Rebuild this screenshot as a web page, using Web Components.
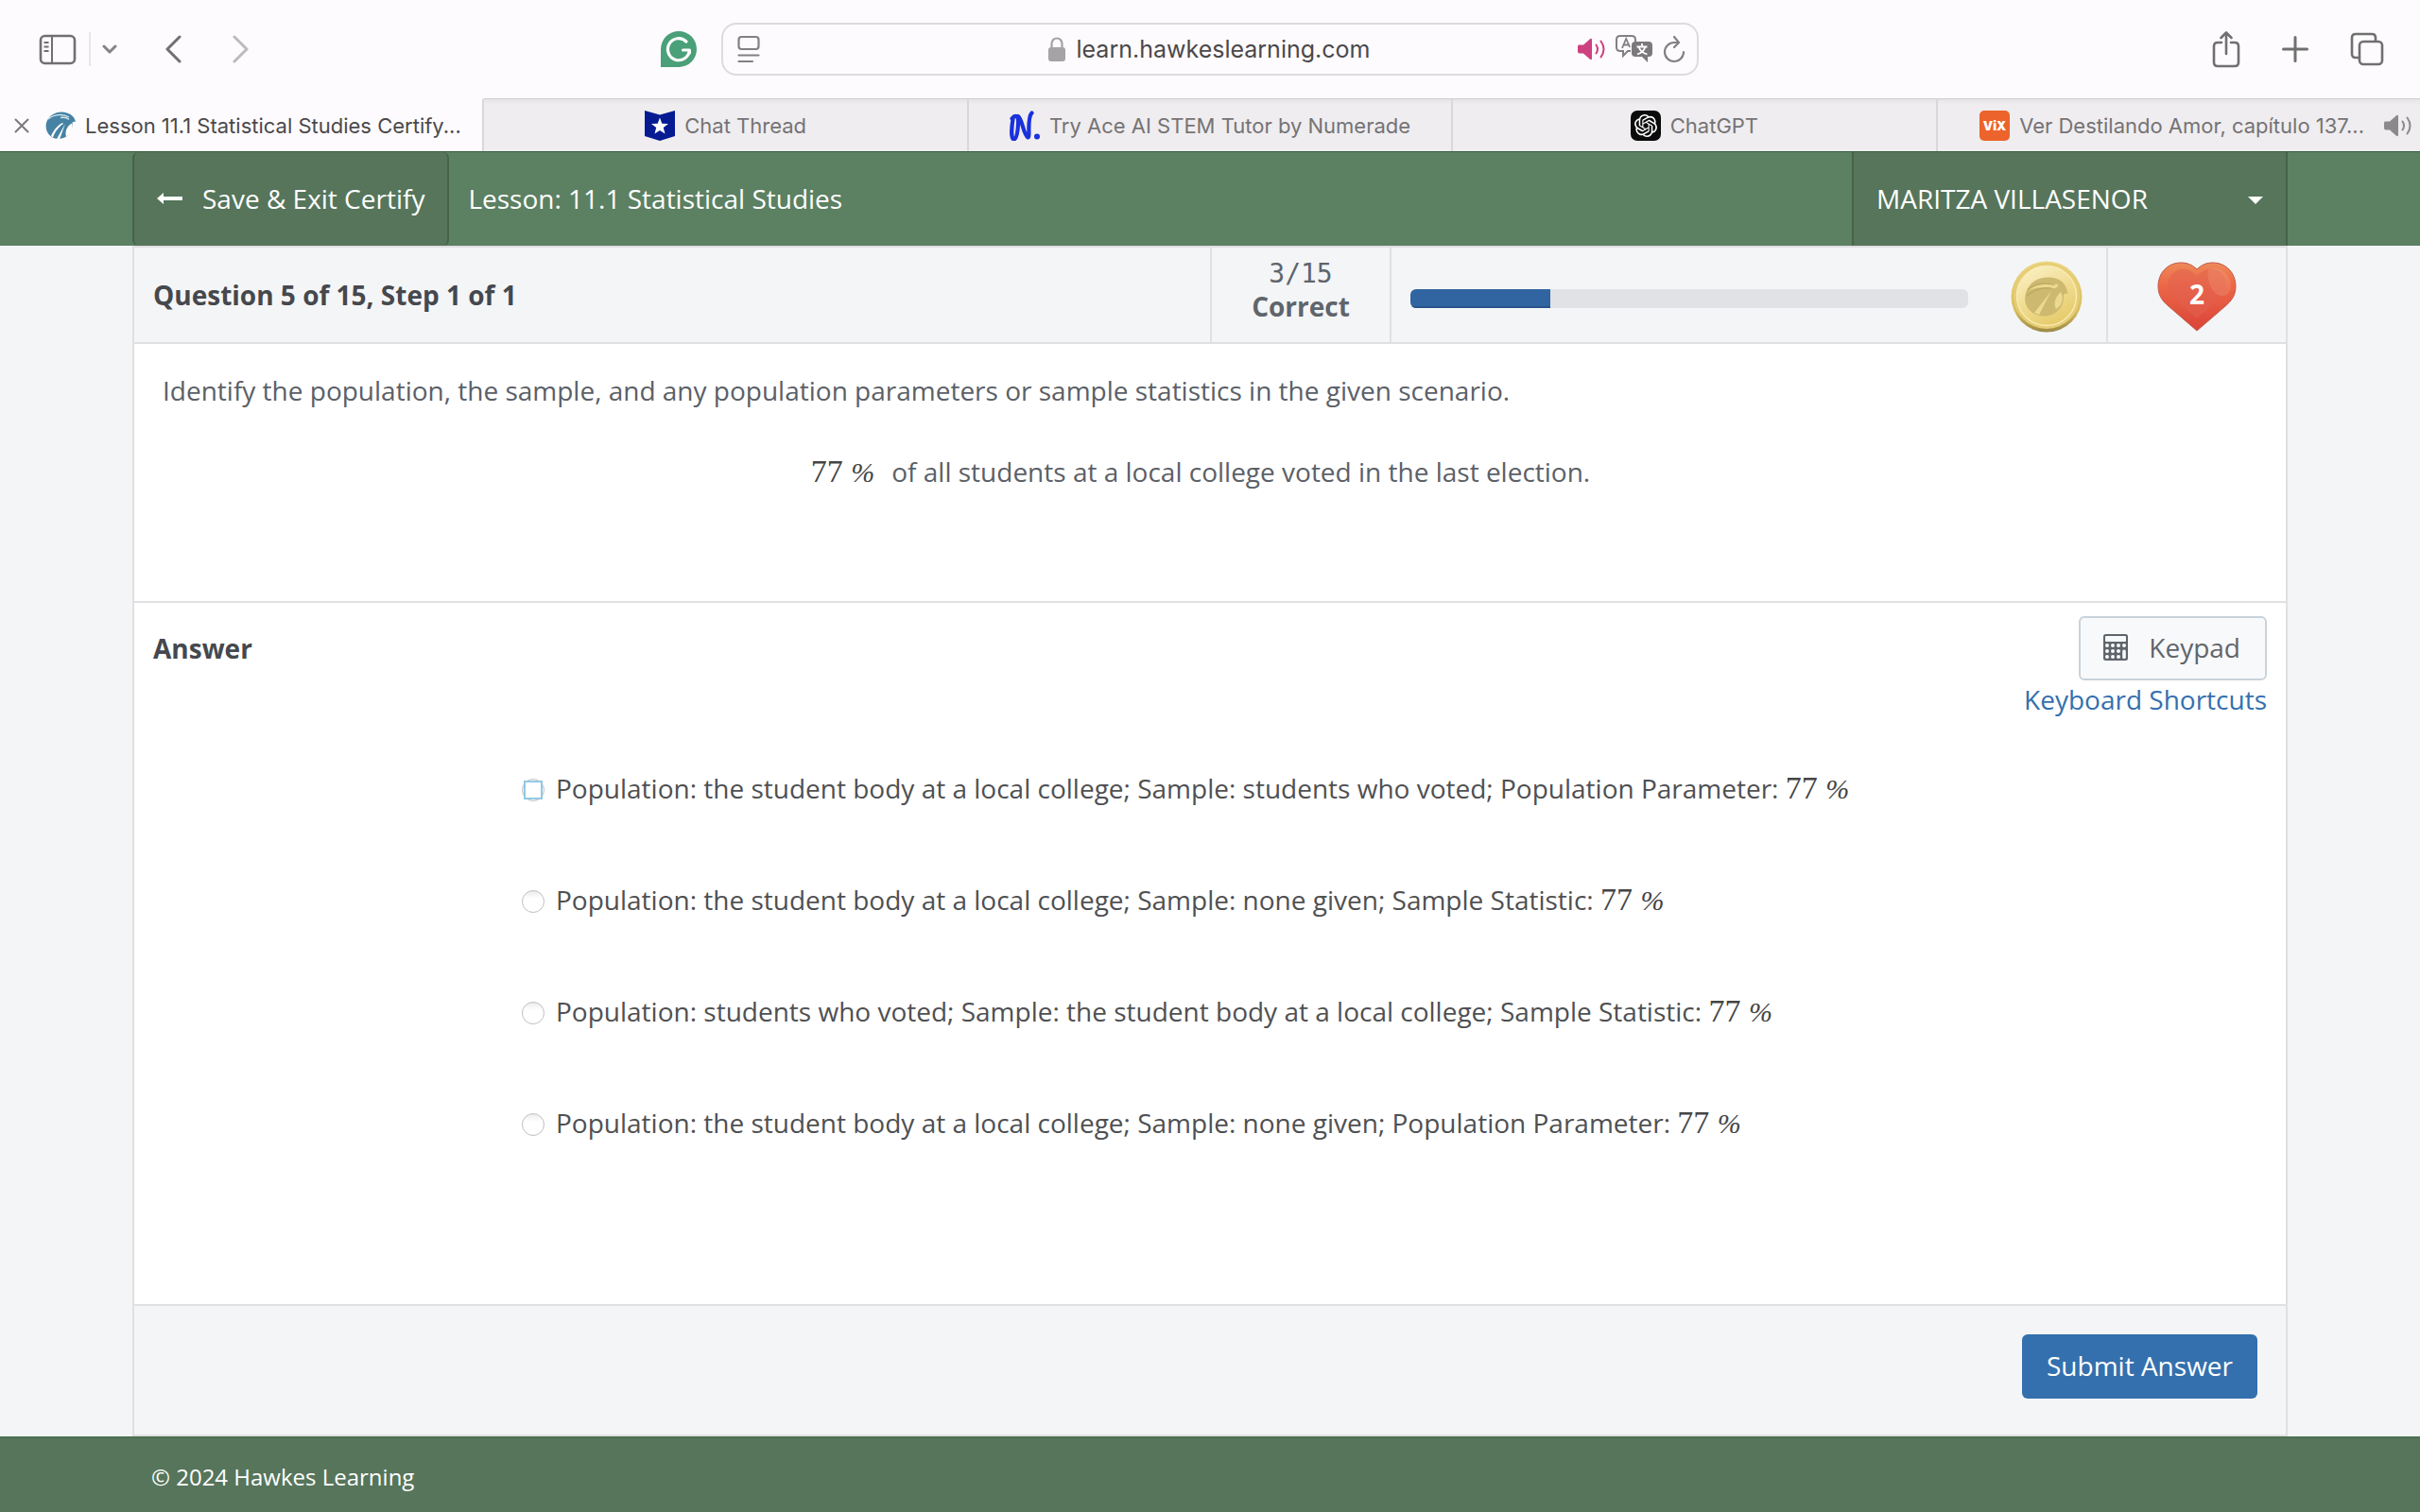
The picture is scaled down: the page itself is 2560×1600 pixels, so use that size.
<!DOCTYPE html>
<html lang="en">
<head>
<meta charset="utf-8">
<title>Lesson 11.1 Statistical Studies Certify</title>
<style>
body { margin: 0; background: #f4f5f7; font-family: "Open Sans", "Noto Sans", sans-serif; font-size: 28px; line-height: 40px; color: #4b4d50; }
</style>
</head>
<body>
<lesson-app></lesson-app>

<script>
const base = `*, *::before, *::after { box-sizing: border-box; }
button, input { font: inherit; color: inherit; margin: 0; padding: 0; border: 0; background: none; }
svg { display: block; flex: none; }`;

function define(name, html) {
  const template = document.createElement('template');
  template.innerHTML = html.replace('<style>', '<style>' + base);
  customElements.define(name, class extends HTMLElement {
    constructor() {
      super();
      this.attachShadow({ mode: 'open' }).append(template.content.cloneNode(true));
    }
  });
}

define('browser-toolbar', `
<style>
:host { display: grid; grid-template-columns: 1fr minmax(0, 1034px) 1fr; align-items: center; height: 104px; background: #fdfbfd; font-family: Inter, sans-serif; color: #707070; }
.side { display: flex; align-items: center; }
.left { padding: 0 26px 0 41px; }
.left .rule { width: 2px; height: 36px; background: #e8e6e8; margin: 0 12px 0 12px; }
.left .back { margin-left: 50px; }
.left .forward { margin-left: 54px; color: #bcbabc; }
.left .assist { margin-left: auto; }
.right { justify-content: flex-end; gap: 44px; padding-right: 38px; }
.address { display: grid; grid-template-columns: 1fr auto 1fr; align-items: center; height: 56px; border: 2px solid #dddbdd; border-radius: 16px; padding: 0 12px 0 15px; }
.site { display: flex; align-items: center; gap: 12px; }
input { width: 316px; height: 40px; font-size: 25px; color: #4b494b; outline: 0; }
.tools { display: flex; align-items: center; justify-content: flex-end; gap: 10px; color: #858385; }
</style>
<div class="side left">
  <button aria-label="Sidebar"><svg width="41" height="34" viewBox="0 0 41 34" fill="none" stroke="currentColor" stroke-width="2.6"><rect x="2" y="3" width="36" height="29" rx="4.500"/><path d="M14 3v29M5.500 10h5M5.500 14.500h5M5.500 19h5" stroke-width="2"/></svg></button>
  <span class="rule"></span>
  <button aria-label="Tab groups"><svg width="16" height="12" viewBox="0 0 16 12" fill="none" stroke="#858385" stroke-width="3" stroke-linecap="round" stroke-linejoin="round"><path d="M2 3l6 6 6-6"/></svg></button>
  <button class="back" aria-label="Back"><svg width="18" height="30" viewBox="0 0 18 30" fill="none" stroke="currentColor" stroke-width="3" stroke-linecap="round" stroke-linejoin="round"><path d="M16 2L3 15l13 13"/></svg></button>
  <button class="forward" aria-label="Forward"><svg width="18" height="30" viewBox="0 0 18 30" fill="none" stroke="currentColor" stroke-width="3" stroke-linecap="round" stroke-linejoin="round"><path d="M2 2l13 13L2 28"/></svg></button>
  <button class="assist" aria-label="Writing assistant"><svg width="38" height="38" viewBox="0 0 38 38"><path d="M0 38V19A19 19 0 1 1 19 38Z" fill="#4aa078"/><path d="M27 11A11.500 11.500 0 1 0 30.400 20H23.500M30.400 20V23" fill="none" stroke="#fff" stroke-width="3.200" stroke-linecap="round" stroke-linejoin="round"/></svg></button>
</div>
<div class="address">
  <svg width="24" height="30" viewBox="0 0 24 30" fill="none" stroke="#828082" stroke-width="2.200" stroke-linecap="round"><rect x="1.500" y="2" width="21" height="13" rx="3"/><path d="M1.500 21.500h21M1.500 28h14.500"/></svg>
  <label class="site">
    <svg width="18" height="26" viewBox="0 0 18 26"><rect y="11" width="18" height="15" rx="3" fill="#a5a3a5"/><path d="M3.500 12V7a5.500 5.500 0 0 1 11 0v5" fill="none" stroke="#a5a3a5" stroke-width="2.200"/></svg>
    <input type="text" aria-label="Address" value="learn.hawkeslearning.com">
  </label>
  <div class="tools">
    <svg width="30" height="24" viewBox="0 0 30 24"><path d="M1 7.500h5L13 1.200q2-1 2 1v19.600q0 2-2 1L6 16.500H2q-2 0-2-2v-5q0-2 1-2z" fill="#ce4080"/><path d="M19.500 7.500q3 4.500 0 9M24.500 3.500q6 8.500 0 17" fill="none" stroke="#ce4080" stroke-width="2" stroke-linecap="round"/></svg>
    <svg width="40" height="30" viewBox="0 0 40 30" fill="none" stroke="#828082" stroke-width="2"><path d="M16 17H13l-5 5v-5H5q-4 0-4-4V5q0-4 4-4h12q4 0 4 4v2"/><path d="M7 14l4.200-10 4 9M8.500 10.500h5" stroke-width="1.800"/><path d="M21 7h14q4 0 4 4v8q0 4-4 4h-1v6l-6-6h-7q-4 0-4-4v-8q0-4 4-4z" fill="#7b797b" stroke="none"/><path d="M28 9v3M22.500 12.500h11M31.500 12.500q-2 6-8.500 8M24.500 12.500q2 6 9 8" stroke="#fff" stroke-width="1.800"/></svg>
    <svg width="24" height="30" viewBox="0 0 24 30" fill="none" stroke="#828082" stroke-width="2.200" stroke-linecap="round" stroke-linejoin="round"><path d="M22 18a10 10 0 1 1-10-10h4.500M12 2l5 6-5 5"/></svg>
  </div>
</div>
<div class="side right">
  <button aria-label="Share"><svg width="30" height="40" viewBox="0 0 30 40" fill="none" stroke="currentColor" stroke-width="2.600" stroke-linecap="round" stroke-linejoin="round"><path d="M10 13H6q-4 0-4 4v17q0 4 4 4h18q4 0 4-4V17q0-4-4-4h-4M15 25V3M9.500 8L15 2.500 20.500 8"/></svg></button>
  <button aria-label="New tab"><svg width="28" height="28" viewBox="0 0 28 28" stroke="currentColor" stroke-width="3" stroke-linecap="round"><path d="M14 1.500v25M1.500 14h25"/></svg></button>
  <button aria-label="Show tabs"><svg width="36" height="36" viewBox="0 0 36 36" fill="none" stroke="currentColor" stroke-width="2.600" stroke-linejoin="round"><rect x="10" y="10" width="24" height="24" rx="4"/><path d="M9 27H6q-4 0-4-4V6q0-4 4-4h17q4 0 4 4v3"/></svg></button>
</div>`);

define('browser-tab', `
<style>
:host { display: flex; min-width: 0; flex: 1 1 0; border-right: 2px solid #d9d7d9; border-top: 1px solid #cfcdcf; background: linear-gradient(#e6e4e6, #efedef 6px); color: #757375; }
:host([active]) { background: #fdfbfd; border-top-color: #fdfbfd; color: #4b494b; }
:host(:last-child) { border-right: 0; }
button { flex: 1; min-width: 0; display: flex; align-items: center; justify-content: center; gap: 10px; font-size: 22px; line-height: 32px; white-space: nowrap; }
:host([active]) button { justify-content: flex-start; padding-left: 15px; }
:host([sound]) button { justify-content: flex-end; padding-right: 8px; }
::slotted(svg) { display: block; flex: none; }
</style>
<button role="tab"><slot name="icon"></slot><span><slot></slot></span><slot name="end"></slot></button>`);

define('tab-strip', `
<style>
:host { display: flex; height: 56px; font-family: Inter, sans-serif; }
.close { margin-right: 7px; }
.speaker { margin-left: 11px; }
</style>
<browser-tab active>
  <svg slot="icon" class="close" width="16" height="16" viewBox="0 0 16 16" stroke="#7b797b" stroke-width="2" stroke-linecap="round"><path d="M1.500 1.500l13 13M14.500 1.500l-13 13"/></svg>
  <svg slot="icon" width="32" height="30" viewBox="0 0 32 30"><path d="M1 12C4 3 13-1 22 1.200c6 1.500 9 5 10 9.800-2-.5-3 0-3.500 1C29 21 23 29 14 29 5 29-1 21 1 12z" fill="#4682a3"/><path d="M3 8C9 3 18 2 25 6M16 6.500q6-1 9 2" fill="none" stroke="#d5e5ed" stroke-width="1.300"/><path d="M18 12C12 15 8 21 6 26l2 1.500C10 22 13 17 19 13zM21 13L12 29l3 .5zM28 12.500c1 6-1 11-6 14-1.500-5 .5-11 6-14z" fill="#fff"/></svg>
  Lesson 11.1 Statistical Studies Certify...
</browser-tab>
<browser-tab>
  <svg slot="icon" width="32" height="32" viewBox="0 0 32 32"><path d="M0 0l16 4.500L32 0v27l-16 5-16-5z" fill="#061a92"/><path d="M16 7.500l2.300 6.200 6.700.3-5.200 4.100 1.700 6.400-5.500-3.600-5.500 3.600 1.700-6.400L7 14l6.700-.3z" fill="#fff"/></svg>
  Chat Thread
</browser-tab>
<browser-tab>
  <svg slot="icon" width="32" height="32" viewBox="0 0 32 32"><path d="M2.500 8.500C6 4 10 5 9 15 8.500 25 7 30.500 4.500 30.500 1.500 30 2 18 3.500 9M9 6c4 1 5.500 20 10.500 22.500C22 28 18 8 23.500 2.500" fill="none" stroke="#1a31dc" stroke-width="4.200" stroke-linecap="round" stroke-linejoin="round"/><circle cx="29" cy="27.500" r="3" fill="#1a31dc"/></svg>
  Try Ace AI STEM Tutor by Numerade
</browser-tab>
<browser-tab>
  <svg slot="icon" width="32" height="32" viewBox="0 0 32 32"><rect width="32" height="32" rx="7" fill="#0b0b0b"/><path transform="translate(4 4)" fill="#fff" d="M22.2819 9.8211a5.9847 5.9847 0 0 0-.5157-4.9108 6.0462 6.0462 0 0 0-6.5098-2.9A6.0651 6.0651 0 0 0 4.9807 4.1818a5.9847 5.9847 0 0 0-3.9977 2.9 6.0462 6.0462 0 0 0 .7427 7.0966 5.98 5.98 0 0 0 .511 4.9107 6.051 6.051 0 0 0 6.5146 2.9001A5.9847 5.9847 0 0 0 13.2599 24a6.0557 6.0557 0 0 0 5.7718-4.2058 5.9894 5.9894 0 0 0 3.9977-2.9001 6.0557 6.0557 0 0 0-.7475-7.0729zm-9.022 12.6081a4.4755 4.4755 0 0 1-2.8764-1.0408l.1419-.0804 4.7783-2.7582a.7948.7948 0 0 0 .3927-.6813v-6.7369l2.02 1.1686a.071.071 0 0 1 .038.052v5.5826a4.504 4.504 0 0 1-4.4945 4.4944zm-9.6607-4.1254a4.4708 4.4708 0 0 1-.5346-3.0137l.142.0852 4.783 2.7582a.7712.7712 0 0 0 .7806 0l5.8428-3.3685v2.3324a.0804.0804 0 0 1-.0332.0615L9.74 19.9502a4.4992 4.4992 0 0 1-6.1408-1.6464zM2.3408 7.8956a4.485 4.485 0 0 1 2.3655-1.9728V11.6a.7664.7664 0 0 0 .3879.6765l5.8144 3.3543-2.0201 1.1685a.0757.0757 0 0 1-.071 0l-4.8303-2.7865A4.504 4.504 0 0 1 2.3408 7.872zm16.5963 3.8558L13.1038 8.364 15.1192 7.2a.0757.0757 0 0 1 .071 0l4.8303 2.7913a4.4944 4.4944 0 0 1-.6765 8.1042v-5.6772a.79.79 0 0 0-.407-.667zm2.0107-3.0231l-.142-.0852-4.7735-2.7818a.7759.7759 0 0 0-.7854 0L9.409 9.2297V6.8974a.0662.0662 0 0 1 .0284-.0615l4.8303-2.7866a4.4992 4.4992 0 0 1 6.6802 4.66zM8.3065 12.863l-2.02-1.1638a.0804.0804 0 0 1-.038-.0567V6.0742a4.4992 4.4992 0 0 1 7.3757-3.4537l-.142.0805L8.704 5.459a.7948.7948 0 0 0-.3927.6813zm1.0976-2.3654l2.602-1.4998 2.6069 1.4998v2.9994l-2.5974 1.4997-2.6067-1.4997Z"/></svg>
  ChatGPT
</browser-tab>
<browser-tab sound>
  <svg slot="icon" width="32" height="32" viewBox="0 0 32 32"><rect width="32" height="32" rx="5" fill="#ec642b"/><text x="16" y="21" text-anchor="middle" font-family="Inter, sans-serif" font-weight="900" font-size="13" fill="#fff">ViX</text></svg>
  Ver Destilando Amor, capítulo 137...
  <svg slot="end" class="speaker" width="30" height="24" viewBox="0 0 30 24"><path d="M1 7.500h5L13 1.200q2-1 2 1v19.600q0 2-2 1L6 16.500H2q-2 0-2-2v-5q0-2 1-2z" fill="#8b898b"/><path d="M19.500 7.500q3 4.500 0 9M24.500 3.500q6 8.500 0 17" fill="none" stroke="#8b898b" stroke-width="2" stroke-linecap="round"/></svg>
</browser-tab>`);

define('lesson-header', `
<style>
:host { display: block; background: #5c8062; border-top: 1px solid #35603f; color: #fff; }
.inner { display: flex; align-items: stretch; height: 99px; margin: 0 140px; }
.exit { display: flex; align-items: center; gap: 20px; padding: 0 24px 2px 24px; background: #56755b; border: 2px solid #466349; border-width: 0 2px; border-radius: 6px; color: #fff; text-decoration: none; }
.title { flex: 1; align-self: center; padding: 0 0 2px 20px; font-size: 28px; font-weight: 400; margin: 0; }
.user { display: flex; align-items: center; justify-content: space-between; width: 461px; padding: 0 24px 2px; background: #56755b; border: 2px solid #466349; border-width: 0 2px; }
.user svg { margin-top: 4px; }
</style>
<header class="inner">
  <a class="exit" href="#exit"><svg width="28" height="14" viewBox="0 0 28 14" fill="#fff"><path d="M0 7l7-6v4h20v4H7v4z"/></svg><span>Save &amp; Exit Certify</span></a>
  <h1 class="title">Lesson: 11.1 Statistical Studies</h1>
  <button class="user" aria-haspopup="menu"><span>MARITZA VILLASENOR</span><svg width="16" height="8" viewBox="0 0 16 8" fill="#fff"><path d="M0 0h16L8 8z"/></svg></button>
</header>`);

define('reward-coin', `
<style>:host { display: block; }</style>
<svg width="76" height="76" viewBox="0 0 76 76" role="img" aria-label="Coin">
  <defs><linearGradient id="rim" x1="0" y1="0" x2="0" y2="1"><stop offset="0" stop-color="#ecd785"/><stop offset=".7" stop-color="#d8bd5e"/><stop offset="1" stop-color="#9c8a45"/></linearGradient>
  <linearGradient id="face" x1=".2" y1="0" x2=".7" y2="1"><stop offset="0" stop-color="#fbf0c4"/><stop offset=".5" stop-color="#f0dc92"/><stop offset="1" stop-color="#e5ca68"/></linearGradient></defs>
  <circle cx="38" cy="38" r="37.500" fill="url(#rim)"/><circle cx="38" cy="37" r="35" fill="#e6cd76"/><circle cx="38" cy="37" r="31.500" fill="url(#face)" stroke="#f8ebb0" stroke-width="1.500"/>
  <path d="M16 34C20 21 32 16 45 18c9 1.500 14 7 15.500 17-2-1-3.500-.5-4.500 1C57 49 47 59 35 58.500 22 58 12 48 16 34z" fill="#cdb96f"/>
  <path d="M18 31c9-8 20-9 30-4M17 37c10-8 20-9 27-8" fill="none" stroke="#bba862" stroke-width="1.200"/>
  <path d="M18 32c8-7 19-8 28-6 2-3 5-1 4 1-4 4-7 1-9 1-8 0-16 0-23 4zM43 32L25 55l5 2zM53 33c4 6 1 15-5 18-3-5-1-13 5-18z" fill="#ecda90"/>
</svg>`);

define('heart-counter', `
<style>
:host { display: grid; place-items: center; }
svg, span { grid-area: 1 / 1; }
span { color: #fff; font-weight: 700; line-height: 40px; padding-bottom: 6px; }
</style>
<svg width="84" height="74" viewBox="0 0 84 74" aria-hidden="true">
  <defs><linearGradient id="h" x1="0" y1="0" x2="0" y2="1"><stop offset="0" stop-color="#ee8a58"/><stop offset=".35" stop-color="#ec6647"/><stop offset="1" stop-color="#da4338"/></linearGradient></defs>
  <path d="M42 8C48 2 54 1 59 1c14 0 24 11 24 25 0 10-5 16-11 21L42 73 12 47C6 42 1 36 1 26 1 12 11 1 25 1c5 0 11 1 17 7z" fill="url(#h)" stroke="#c0594a" stroke-width="1"/>
  <path d="M42 15C49 8 54 7 59 8c9 1 14 9 14 18 0 6-3 10-8 14L42 60 19 40c-5-4-8-8-8-14 0-9 6-17 14-18 6-1 11 1 17 7z" fill="#e2604f" opacity=".55"/>
  <path d="M54 8c12-4 24 4 24 18 0 6-4 10-9 10C60 36 52 24 54 8z" fill="#f3a07c" opacity=".3"/>
</svg>
<span><slot></slot></span>`);

define('status-bar', `
<style>
:host { display: flex; height: 104px; border-top: 2px solid #e0e0e2; border-bottom: 2px solid #e0e0e2; background: #f4f5f7; color: #5f656c; }
:host > * { border-right: 2px solid #e0e0e2; }
h2 { flex: 1; display: flex; align-items: center; margin: 0; padding-left: 20px; font-size: 28px; font-weight: 700; color: #45484d; }
.score { width: 190px; text-align: center; line-height: 34px; padding-top: 11px; }
.score span { display: block; font-family: "DejaVu Sans Mono", monospace; }
.progress { width: 758px; display: flex; align-items: center; justify-content: space-between; padding: 4px 25px 0 20px; }
.bar { width: 590px; height: 20px; border-radius: 6px; background: #e1e2e6; overflow: hidden; margin-top: 4px; }
.fill { width: 25%; height: 100%; background: #3165a2; border-bottom: 2px solid #28548a; }
.lives { width: 188px; display: grid; place-items: center; border-right: 0; padding-top: 4px; }
</style>
<h2>Question 5 of 15, Step 1 of 1</h2>
<div class="score"><span>3/15</span><b>Correct</b></div>
<div class="progress"><div class="bar" role="progressbar" aria-label="Correct answers" aria-valuenow="25" aria-valuemin="0" aria-valuemax="100"><div class="fill"></div></div><reward-coin></reward-coin></div>
<div class="lives"><heart-counter>2</heart-counter></div>`);

define('math-value', `
<style>
:host { display: inline; font-family: "Liberation Serif", serif; font-size: 34px; line-height: 1px; color: #454545; }
i { font-size: 30px; }
</style>
<slot></slot> <i>%</i>`);

define('question-panel', `
<style>
:host { display: block; min-height: 274px; padding: 29px 50px 0 30px; background: #fff; border-bottom: 2px solid #e0e0e2; color: #5b6067; }
p { margin: 0 0 46px; }
.scenario { text-align: center; }
math-value { margin-right: 18px; }
</style>
<p>Identify the population, the sample, and any population parameters or sample statistics in the given scenario.</p>
<p class="scenario"><math-value>77</math-value>of all students at a local college voted in the last election.</p>`);

define('answer-panel', `
<style>
:host { display: block; flex: 1; padding: 14px 20px 0; background: #fff; }
.head { display: flex; align-items: center; justify-content: space-between; }
h2 { margin: 0; font-size: 28px; font-weight: 700; color: #45484d; }
.keypad { display: flex; align-items: center; gap: 22px; height: 68px; padding: 0 26px 2px 24px; border: 2px solid #c8d3da; border-radius: 6px; background: #f8f9fb; color: #5f656c; }
.help { text-align: right; }
a { color: #3470ae; text-decoration: none; }
fieldset { display: grid; justify-items: start; gap: 78px; margin: 54px 0 0; padding: 0 0 0 390px; border: 0; }
label { display: flex; align-items: center; gap: 12px; color: #4f5052; }
input { appearance: none; display: grid; width: 24px; height: 24px; border: 1px solid #bfbfbf; border-radius: 50%; background: linear-gradient(#ececec, #fff 8px); margin-top: 4px; outline: 0; }
input.current { background: #fff; }
input.current::before { content: ""; margin: 1px; border: 2px solid #93c8e4; }
</style>
<div class="head"><h2>Answer</h2>
<button class="keypad"><svg width="26" height="28" viewBox="0 0 26 28"><rect width="26" height="28" rx="2.500" fill="#5f656c"/><g fill="#f8f9fb"><rect x="2" y="2" width="22" height="6" rx="1"/><circle cx="4" cy="12" r="2"/><circle cx="10" cy="12" r="2"/><circle cx="16" cy="12" r="2"/><circle cx="22" cy="12" r="2"/><circle cx="4" cy="18" r="2"/><circle cx="10" cy="18" r="2"/><circle cx="16" cy="18" r="2"/><circle cx="4" cy="24" r="2"/><circle cx="10" cy="24" r="2"/><circle cx="16" cy="24" r="2"/><rect x="20.200" y="16.500" width="3.600" height="9.500" rx="1.500"/></g></svg>Keypad</button></div>
<div class="help"><a href="#shortcuts">Keyboard Shortcuts</a></div>
<fieldset aria-label="Answer">
  <label><input class="current" type="radio" name="answer"><span>Population: the student body at a local college; Sample: students who voted; Population Parameter: <math-value>77</math-value></span></label>
  <label><input type="radio" name="answer"><span>Population: the student body at a local college; Sample: none given; Sample Statistic: <math-value>77</math-value></span></label>
  <label><input type="radio" name="answer"><span>Population: students who voted; Sample: the student body at a local college; Sample Statistic: <math-value>77</math-value></span></label>
  <label><input type="radio" name="answer"><span>Population: the student body at a local college; Sample: none given; Population Parameter: <math-value>77</math-value></span></label>
</fieldset>`);

define('submit-bar', `
<style>
:host { display: flex; justify-content: flex-end; padding: 30px; height: 140px; background: #f4f5f7; border-top: 2px solid #e0e0e2; border-bottom: 2px solid #e0e0e2; }
button { height: 68px; padding: 0 26px 2px; border-radius: 6px; background: #3470ae; color: #fff; }
</style>
<button>Submit Answer</button>`);

define('page-footer', `
<style>
:host { display: flex; align-items: center; height: 80px; padding: 4px 160px 0; background: #56755b; border-top: 2px solid #4d6f53; color: #fff; font-size: 24px; }
</style>
<span>© 2024 Hawkes Learning</span>`);

define('lesson-app', `
<style>
:host { display: flex; flex-direction: column; min-height: 100vh; }
main { flex: 1; display: flex; flex-direction: column; margin: 0 140px; border: 2px solid #e0e0e2; border-width: 0 2px; }
</style>
<browser-toolbar></browser-toolbar>
<tab-strip role="tablist"></tab-strip>
<lesson-header></lesson-header>
<main>
  <status-bar></status-bar>
  <question-panel></question-panel>
  <answer-panel></answer-panel>
  <submit-bar></submit-bar>
</main>
<page-footer></page-footer>`);
</script>
</body>
</html>
